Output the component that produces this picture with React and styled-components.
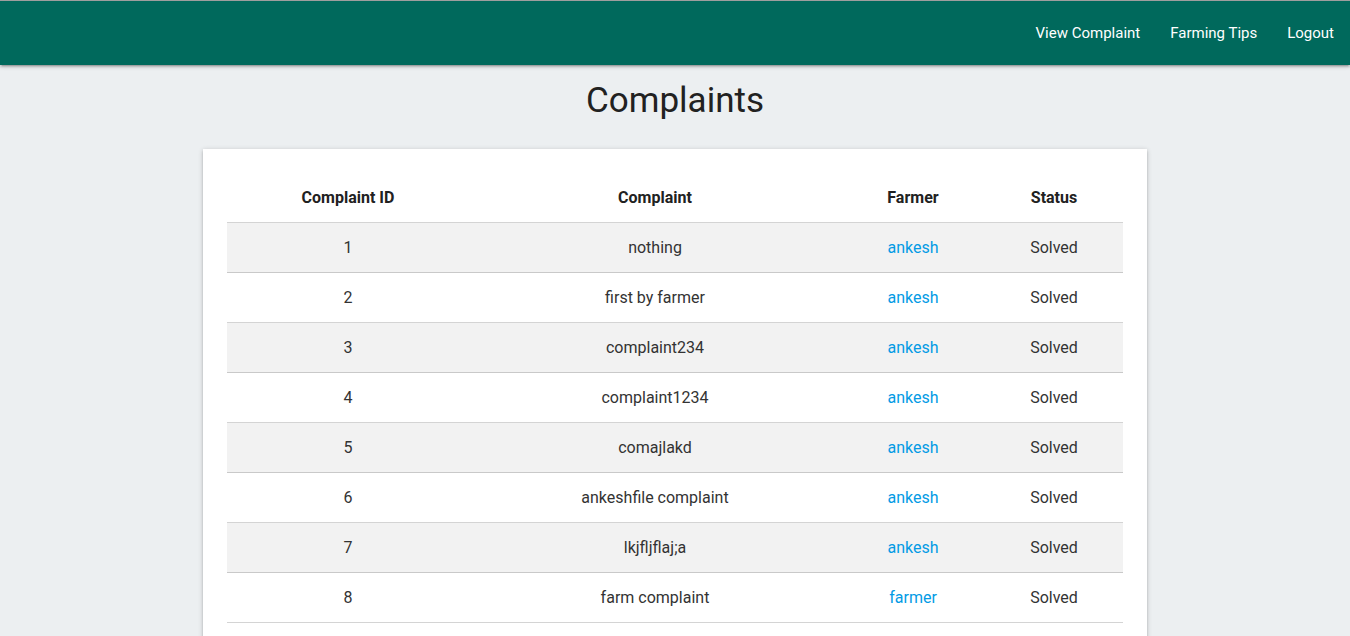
import React from "react";
import styled, { createGlobalStyle } from "styled-components";

const GlobalStyle = createGlobalStyle`
  html, body {
    margin: 0;
    padding: 0;
    background: #eceff1;
    font-family: Roboto, "Liberation Sans", sans-serif;
    color: rgba(0, 0, 0, 0.87);
  }
`;

const Nav = styled.nav`
  height: 64px;
  background-color: #00695c;
  border-top: 1px solid #9e9e9e;
  box-shadow: 0 2px 2px 0 rgba(0, 0, 0, 0.14), 0 3px 1px -2px rgba(0, 0, 0, 0.12),
    0 1px 5px 0 rgba(0, 0, 0, 0.2);
  display: flex;
  justify-content: flex-end;
  align-items: center;
  padding-right: 1px;
`;

const NavLink = styled.a`
  color: #fff;
  font-size: 15px;
  padding: 0 15px;
  line-height: 64px;
  text-decoration: none;
  cursor: pointer;
`;

const Title = styled.h1`
  margin: 16px 0 0;
  text-align: center;
  font-size: 35px;
  font-weight: 400;
  line-height: 40px;
  color: #212121;
`;

const Card = styled.div`
  width: 944px;
  margin: 28px auto 0;
  background: #fff;
  padding: 24px;
  box-sizing: border-box;
  box-shadow: 0 2px 2px 0 rgba(0, 0, 0, 0.14), 0 3px 1px -2px rgba(0, 0, 0, 0.12),
    0 1px 5px 0 rgba(0, 0, 0, 0.2);
`;

const Table = styled.table`
  width: 100%;
  border-collapse: collapse;
  font-size: 16px;
`;

const Th = styled.th`
  width: ${(p) => p.w}px;
  padding: 15px 5px;
  line-height: 19px;
  font-weight: 700;
  font-size: 16px;
  text-align: center;
  color: #212121;
`;

const Row = styled.tr`
  border-bottom: 1px solid rgba(0, 0, 0, 0.17);
  background: ${(p) => (p.striped ? "#f2f2f2" : "transparent")};
`;

const Td = styled.td`
  padding: 15px 5px;
  line-height: 19px;
  text-align: center;
  color: #333;
`;

const FarmerLink = styled.a`
  color: #039be5;
  text-decoration: none;
`;

const complaints = [
  { id: 1, text: "nothing", farmer: "ankesh" },
  { id: 2, text: "first by farmer", farmer: "ankesh" },
  { id: 3, text: "complaint234", farmer: "ankesh" },
  { id: 4, text: "complaint1234", farmer: "ankesh" },
  { id: 5, text: "comajlakd", farmer: "ankesh" },
  { id: 6, text: "ankeshfile complaint", farmer: "ankesh" },
  { id: 7, text: "lkjfljflaj;a", farmer: "ankesh" },
  { id: 8, text: "farm complaint", farmer: "farmer" },
];

export default function App() {
  return (
    <>
      <GlobalStyle />
      <Nav>
        <NavLink>View Complaint</NavLink>
        <NavLink>Farming Tips</NavLink>
        <NavLink>Logout</NavLink>
      </Nav>
      <Title>Complaints</Title>
      <Card>
        <Table>
          <thead>
            <Row>
              <Th w={232}>Complaint ID</Th>
              <Th w={362}>Complaint</Th>
              <Th w={134}>Farmer</Th>
              <Th w={128}>Status</Th>
            </Row>
          </thead>
          <tbody>
            {complaints.map((c, i) => (
              <Row key={c.id} striped={i % 2 === 0}>
                <Td>{c.id}</Td>
                <Td>{c.text}</Td>
                <Td>
                  <FarmerLink>{c.farmer}</FarmerLink>
                </Td>
                <Td>Solved</Td>
              </Row>
            ))}
          </tbody>
        </Table>
      </Card>
    </>
  );
}
